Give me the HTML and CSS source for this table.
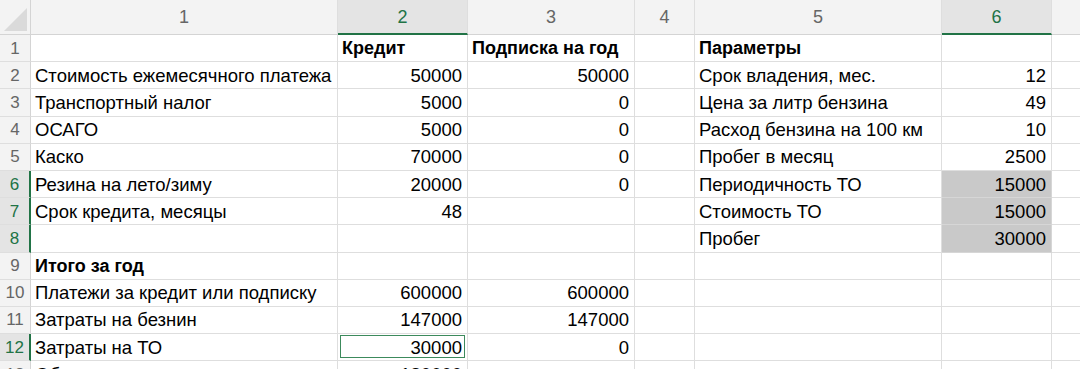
FILE: index.html
```html
<!DOCTYPE html>
<html lang="ru">
<head>
<meta charset="utf-8">
<link rel="stylesheet" href="styles.css">
</head>
<body>
<div class="sheet">
  <div class="corner"><span class="tri"></span></div>
  <div class="ch">1</div>
  <div class="ch sel">2</div>
  <div class="ch">3</div>
  <div class="ch">4</div>
  <div class="ch">5</div>
  <div class="ch sel">6</div>
  <div class="ch last"></div>

  <div class="rh">1</div>
  <div class="c"></div><div class="c b">Кредит</div><div class="c b">Подписка на год</div><div class="c"></div><div class="c b">Параметры</div><div class="c"></div><div class="c last"></div>

  <div class="rh">2</div>
  <div class="c">Стоимость ежемесячного платежа</div><div class="c n">50000</div><div class="c n">50000</div><div class="c"></div><div class="c">Срок владения, мес.</div><div class="c n">12</div><div class="c last"></div>

  <div class="rh">3</div>
  <div class="c">Транспортный налог</div><div class="c n">5000</div><div class="c n">0</div><div class="c"></div><div class="c">Цена за литр бензина</div><div class="c n">49</div><div class="c last"></div>

  <div class="rh">4</div>
  <div class="c">ОСАГО</div><div class="c n">5000</div><div class="c n">0</div><div class="c"></div><div class="c">Расход бензина на 100 км</div><div class="c n">10</div><div class="c last"></div>

  <div class="rh">5</div>
  <div class="c">Каско</div><div class="c n">70000</div><div class="c n">0</div><div class="c"></div><div class="c">Пробег в месяц</div><div class="c n">2500</div><div class="c last"></div>

  <div class="rh sel">6</div>
  <div class="c">Резина на лето/зиму</div><div class="c n">20000</div><div class="c n">0</div><div class="c"></div><div class="c">Периодичность ТО</div><div class="c n gray">15000</div><div class="c last"></div>

  <div class="rh sel">7</div>
  <div class="c">Срок кредита, месяцы</div><div class="c n">48</div><div class="c"></div><div class="c"></div><div class="c">Стоимость ТО</div><div class="c n gray">15000</div><div class="c last"></div>

  <div class="rh sel">8</div>
  <div class="c"></div><div class="c"></div><div class="c"></div><div class="c"></div><div class="c">Пробег</div><div class="c n gray">30000</div><div class="c last"></div>

  <div class="rh">9</div>
  <div class="c b">Итого за год</div><div class="c"></div><div class="c"></div><div class="c"></div><div class="c"></div><div class="c"></div><div class="c last"></div>

  <div class="rh">10</div>
  <div class="c">Платежи за кредит или подписку</div><div class="c n">600000</div><div class="c n">600000</div><div class="c"></div><div class="c"></div><div class="c"></div><div class="c last"></div>

  <div class="rh">11</div>
  <div class="c">Затраты на безнин</div><div class="c n">147000</div><div class="c n">147000</div><div class="c"></div><div class="c"></div><div class="c"></div><div class="c last"></div>

  <div class="rh sel">12</div>
  <div class="c">Затраты на ТО</div><div class="c n active"><span>30000</span></div><div class="c n">0</div><div class="c"></div><div class="c"></div><div class="c"></div><div class="c last"></div>

  <div class="rh">13</div>
  <div class="c">Общие затраты</div><div class="c n">180000</div><div class="c n"></div><div class="c"></div><div class="c"></div><div class="c"></div><div class="c last"></div>
</div>
</body>
</html>
```

FILE: styles.css
```css
html, body {
  margin: 0;
  padding: 0;
  background: #ffffff;
  overflow: hidden;
}

.sheet {
  display: grid;
  grid-template-columns: 31px 307px 130px 167px 60px 247px 110px 60px;
  grid-template-rows: 35px;
  grid-auto-rows: 27.2px;
  font-family: "Liberation Sans", Arial, sans-serif;
  font-size: 18.5px;
  color: #000;
  width: 1112px;
  height: 369px;
  overflow: hidden;
}

.sheet > div {
  box-sizing: border-box;
  border-right: 1px solid #dedede;
  border-bottom: 1px solid #dedede;
  display: flex;
  align-items: center;
  white-space: nowrap;
  overflow: hidden;
  position: relative;
}

.corner {
  background: #f3f3f3;
  border-right-color: #d4d4d4 !important;
  border-bottom-color: #d4d4d4 !important;
}

.tri {
  position: absolute;
  right: 3px;
  bottom: 3px;
  width: 0;
  height: 0;
  border-left: 23px solid transparent;
  border-bottom: 23px solid #dadada;
}

.ch {
  background: #f3f3f3;
  justify-content: center;
  color: #666;
  font-size: 18px;
  padding-top: 1px;
  border-bottom-color: #d4d4d4 !important;
}

.ch.sel {
  background: #e4e4e4;
  color: #217346;
  border-bottom: 2px solid #217346 !important;
}

.rh {
  background: #f3f3f3;
  justify-content: center;
  color: #666;
  font-size: 17px;
  padding-top: 1px;
  border-right-color: #d4d4d4 !important;
}

.rh.sel {
  background: #e4e4e4;
  color: #217346;
  border-right: 2px solid #217346 !important;
}

.c {
  padding: 1px 5px 0 4px;
}

.c.b {
  font-weight: bold;
  font-size: 18px;
}

.c.n {
  justify-content: flex-end;
}

.c.gray {
  background: #c9c9c9;
  border-right-color: #d6d6d6 !important;
  border-bottom-color: #d6d6d6 !important;
}

.c.active::after {
  content: "";
  position: absolute;
  left: 2px;
  right: 2px;
  top: 1px;
  bottom: 2px;
  border: 1px solid #3c8a5c;
}
```
